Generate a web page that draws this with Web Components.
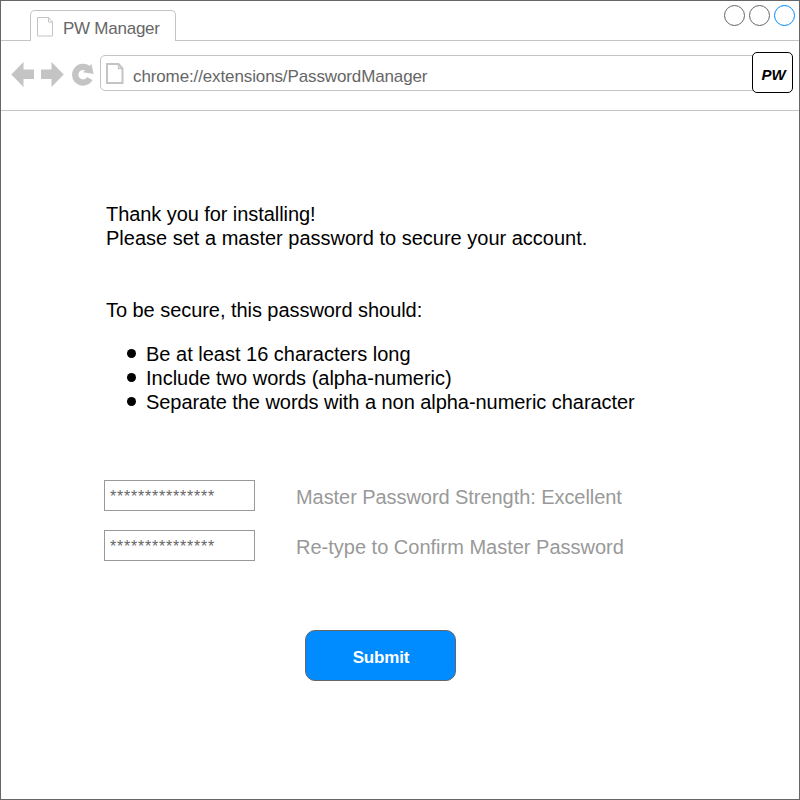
<!DOCTYPE html>
<html lang="en">
<head>
<meta charset="utf-8">
<title>PW Manager</title>
<style>
html, body { margin: 0; height: 100%; background: #fff; overflow: hidden; }
body { font-family: "Liberation Sans", Arial, Helvetica, sans-serif; }
</style>
</head>
<body>
<browser-window>
  <tab-strip slot="tabs">PW Manager</tab-strip>
  <nav-bar slot="nav" badge="PW">chrome://extensions/PasswordManager</nav-bar>
  <master-setup></master-setup>
</browser-window>

<script>
function define(name, html) {
  const t = document.createElement('template');
  t.innerHTML = html;
  customElements.define(name, class extends HTMLElement {
    constructor() {
      super();
      this.attachShadow({ mode: 'open' }).append(t.content.cloneNode(true));
    }
    connectedCallback() {
      const b = this.shadowRoot.querySelector('[data-badge]');
      if (b) b.textContent = this.getAttribute('badge') || '';
    }
  });
}

define('browser-window', `
<style>
:host { display: flex; flex-direction: column; box-sizing: border-box; width: 800px; height: 800px; border: 1px solid #666; background: #fff; }
</style>
<slot name="tabs"></slot><slot name="nav"></slot><slot></slot>`);

define('tab-strip', `
<style>
:host { display: flex; align-items: flex-end; height: 40px; font-size: 17px; color: #666; }
.lead, .rest { box-sizing: border-box; height: 40px; border-bottom: 1px solid #c4c4c4; }
.lead { width: 29px; }
.rest { flex: 1; display: flex; justify-content: flex-end; gap: 4px; padding: 4px 4px 0 0; }
.tab { box-sizing: border-box; width: 146px; height: 31px; border: 1px solid #c4c4c4; border-bottom: 0; border-radius: 5px 5px 0 0; display: flex; align-items: flex-start; padding: 6px 0 0 6px; }
.tab svg { margin-right: 9px; flex: none; }
.dot { box-sizing: border-box; width: 21px; height: 21px; border: 1px solid #666; border-radius: 50%; }
.blue { border-color: #008cff; }
span { white-space: nowrap; letter-spacing: -.25px; line-height: 20px; padding-top: 2px; }
</style>
<div class="lead"></div>
<div class="tab"><svg width="17" height="20" viewBox="0 0 17 20" fill="none" stroke="#c4c4c4"><path d="M.5.5h11l4 4.500v14H.5zM11.500.5v4.500h4"/></svg><span><slot></slot></span></div>
<div class="rest"><div class="dot"></div><div class="dot"></div><div class="dot blue"></div></div>`);

define('nav-bar', `
<style>
:host { display: flex; align-items: flex-start; box-sizing: border-box; height: 70px; border-bottom: 1px solid #c4c4c4; padding: 0 6px 0 10px; font-size: 17px; color: #666; }
svg { flex: none; display: block; }
.icons { display: flex; gap: 7px; width: 89px; padding-top: 21px; }
.url { box-sizing: border-box; height: 36px; flex: 1; border: 1px solid #c4c4c4; border-radius: 5px; display: flex; align-items: flex-start; padding: 7px 0 0 5px; margin-top: 14px; }
.url svg { margin-right: 9px; }
.url span { white-space: nowrap; line-height: 20px; padding-top: 4px; letter-spacing: -.12px; }
.badge { position: relative; box-sizing: border-box; width: 41px; height: 41px; margin: 11px 0 0 -6px; border: 1px solid #000; border-radius: 5px; background: #fff; color: #000; font: italic bold 15px "Liberation Sans", Arial, sans-serif; display: flex; align-items: center; justify-content: center; padding: 4px 0 0 2px; }
</style>
<div class="icons">
<svg width="23" height="25" viewBox="0 0 23 25" fill="#c4c4c4"><path d="M.3 12.500L12.500 0v7.500H23v9.500H12.500V25z"/></svg>
<svg width="23" height="25" viewBox="0 0 23 25" fill="#c4c4c4"><path d="M22.700 12.500L10.500 0v7.500H0v9.500H10.500V25z"/></svg>
<svg width="24" height="25" viewBox="0 0 24 25"><path d="M17.500 7.200A7.800 7.800 0 1 0 18.800 16.500" fill="none" stroke="#c4c4c4" stroke-width="6.200"/><path d="M20.400 2L22.700 11.900 12 10.200z" fill="#c4c4c4"/></svg>
</div>
<div class="url"><svg width="18" height="21" viewBox="0 0 18 21" fill="none" stroke="#c4c4c4" stroke-width="2"><path d="M1 1h11.500l4 4.500V20H1z"/><path d="M12.500 1v4.500h4" stroke-width="1.300"/></svg><span><slot></slot></span></div>
<div class="badge" data-badge></div>`);

define('password-row', `
<style>
:host { display: flex; align-items: center; height: 31px; gap: 41px; }
.box { box-sizing: border-box; width: 151px; height: 31px; border: 1px solid #999; padding: 0 0 0 5px; font-size: 16px; letter-spacing: .78px; line-height: 31px; color: #666; overflow: hidden; }
.label { color: #999; font-size: 20px; white-space: nowrap; padding-top: 3px; letter-spacing: var(--track, 0); }
</style>
<div class="box">***************</div><div class="label"><slot></slot></div>`);

define('submit-button', `
<style>
:host { display: flex; align-items: center; justify-content: center; box-sizing: border-box; width: 151px; height: 51px; border: 1px solid #666; border-radius: 10px; background: #008cff; color: #fff; font-weight: bold; font-size: 17px; letter-spacing: -.15px; padding: 4px 0 0 1px; }
</style><slot></slot>`);

define('master-setup', `
<style>
:host { display: block; padding: 91px 0 0 105px; font-size: 20px; line-height: 24px; color: #000; white-space: nowrap; }
p { margin: 0; }
p:first-of-type { letter-spacing: -.07px; }
.req { margin-top: 48px; letter-spacing: -.05px; }
ul { list-style: none; margin: 20px 0 0; padding: 0 0 0 21px; }
li { display: flex; align-items: center; gap: 10px; }
li:last-child { letter-spacing: -.05px; }
li::before { content: ""; width: 9px; height: 9px; border-radius: 50%; background: #000; margin-top: -2px; }
.form { display: flex; flex-direction: column; gap: 19px; margin: 66px 0 0 -2px; }
.form password-row:first-child { --track: -.06px; }
submit-button { margin: 69px 0 0 199px; }
</style>
<p>Thank you for installing!</p>
<p>Please set a master password to secure your account.</p>
<p class="req">To be secure, this password should:</p>
<ul><li>Be at least 16 characters long</li><li>Include two words (alpha-numeric)</li><li>Separate the words with a non alpha-numeric character</li></ul>
<div class="form"><password-row>Master Password Strength: Excellent</password-row><password-row>Re-type to Confirm Master Password</password-row></div>
<submit-button>Submit</submit-button>`);
</script>
</body>
</html>
